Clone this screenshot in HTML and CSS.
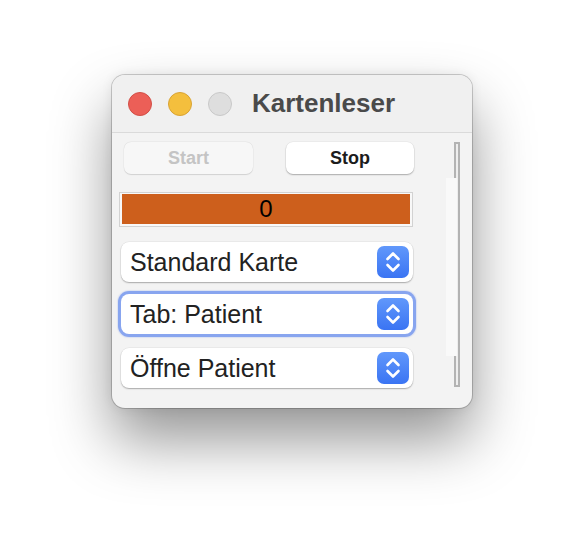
FILE: index.html
```html
<!DOCTYPE html>
<html>
<head>
    <title>Kartenleser</title>
    <link rel="stylesheet" href="styles.css">
</head>
<body>
    <div class="window">
        <div class="titlebar">
            <span class="light red"></span>
            <span class="light yellow"></span>
            <span class="light gray"></span>
            <span class="title">Kartenleser</span>
        </div>

        <div class="content">
            <div class="main">
                <div class="buttons">
                    <button class="btn disabled">Start</button>
                    <button class="btn">Stop</button>
                </div>

                <div class="counter">
                    <div class="counter-inner">0</div>
                </div>

                <div class="popup first">
                    <span class="popup-label">Standard Karte</span>
                    <span class="stepper">
                        <svg width="32" height="32" viewBox="0 0 32 32">
                            <path d="M10.5 13 L16 7.5 L21.5 13" />
                            <path d="M10.5 19 L16 24.5 L21.5 19" />
                        </svg>
                    </span>
                </div>

                <div class="popup focused">
                    <span class="popup-label">Tab: Patient</span>
                    <span class="stepper">
                        <svg width="32" height="32" viewBox="0 0 32 32">
                            <path d="M10.5 13 L16 7.5 L21.5 13" />
                            <path d="M10.5 19 L16 24.5 L21.5 19" />
                        </svg>
                    </span>
                </div>

                <div class="popup last">
                    <span class="popup-label">Öffne Patient</span>
                    <span class="stepper">
                        <svg width="32" height="32" viewBox="0 0 32 32">
                            <path d="M10.5 13 L16 7.5 L21.5 13" />
                            <path d="M10.5 19 L16 24.5 L21.5 19" />
                        </svg>
                    </span>
                </div>
            </div>

            <div class="side">
                <div class="track"></div>
                <div class="patch"></div>
            </div>
        </div>
    </div>
</body>
</html>
```

FILE: styles.css
```css
html, body {
    margin: 0;
    min-height: 556px;
    background: #ffffff;
}

body {
    font-family: 'Liberation Sans', Arial, sans-serif;
    padding-top: 75px;
    box-sizing: border-box;
}

.window {
    margin-left: 112px;
    width: 360px;
    height: 333px;
    border-radius: 13px;
    background: #f3f3f3;
    box-shadow: 0 32px 60px rgba(0,0,0,0.42), 0 0 12px rgba(0,0,0,0.08), 0 0 0 1px rgba(0,0,0,0.18);
    overflow: hidden;
}

.titlebar {
    height: 57px;
    border-bottom: 1px solid #dadada;
    background: #f0f0f0;
    display: flex;
    align-items: center;
    padding-left: 16px;
    gap: 16px;
}

.light {
    width: 22px;
    height: 22px;
    border-radius: 50%;
    border: 1px solid;
}

.light.red {
    background: #ec5f57;
    border-color: #d24f47;
}

.light.yellow {
    background: #f4bf3d;
    border-color: #d9a334;
}

.light.gray {
    background: #dedede;
    border-color: #c9c9c9;
}

.title {
    margin-left: 4px;
    font-size: 26px;
    font-weight: bold;
    color: #4a4a4a;
}

.content {
    display: flex;
    padding-top: 9px;
}

.main {
    margin-left: 7px;
    width: 296px;
}

.buttons {
    display: flex;
    gap: 33px;
    padding-left: 5px;
}

.btn {
    width: 129px;
    height: 32px;
    border: none;
    border-radius: 7px;
    background: #ffffff;
    font-family: 'Liberation Sans', Arial, sans-serif;
    font-size: 18px;
    font-weight: bold;
    color: #1c1c1c;
    box-shadow: 0 1px 1.5px rgba(0,0,0,0.28), 0 0 0 0.5px rgba(0,0,0,0.06);
    padding: 0;
}

.btn + .btn {
    width: 128px;
}

.btn.disabled {
    background: #f7f7f7;
    color: #c4c4c4;
    box-shadow: 0 0.5px 1px rgba(0,0,0,0.12), 0 0 0 0.5px rgba(0,0,0,0.04);
}

.counter {
    margin-top: 18px;
    width: 294px;
    height: 35px;
    box-sizing: border-box;
    border: 1px solid #d2d2d2;
    padding: 1px 2px 2px 2px;
    background: #f8f8f8;
}

.counter-inner {
    height: 100%;
    background: #cd5f1c;
    display: flex;
    align-items: center;
    justify-content: center;
    font-size: 24px;
    color: #000000;
}

.popup {
    margin-left: 2px;
    width: 292px;
    height: 40px;
    box-sizing: border-box;
    border-radius: 8px;
    background: #ffffff;
    box-shadow: 0 1px 1.5px rgba(0,0,0,0.28), 0 0 0 0.5px rgba(0,0,0,0.07);
    display: flex;
    align-items: center;
    justify-content: space-between;
    padding: 0 4px 0 9px;
}

.popup.first {
    margin-top: 15px;
}

.popup.focused {
    margin-top: 12px;
    box-shadow: 0 0 0 3px rgba(86,128,238,0.62), 0 0 1px 4px rgba(86,128,238,0.15);
}

.popup.last {
    margin-top: 14px;
}

.popup-label {
    font-size: 25px;
    color: #222222;
}

.stepper {
    width: 32px;
    height: 32px;
    border-radius: 7px;
    background: linear-gradient(#6198fb, #3a74f3);
    display: flex;
}

.stepper path {
    fill: none;
    stroke: #ffffff;
    stroke-width: 2.6;
    stroke-linecap: round;
    stroke-linejoin: round;
}

.side {
    position: relative;
    flex: 1;
}

.track {
    margin-left: 39px;
    width: 6px;
    height: 245px;
    box-sizing: border-box;
    border: 2px solid #b3b3b3;
    background: #eeeeee;
}

.patch {
    position: absolute;
    left: 31px;
    top: 36px;
    width: 11px;
    height: 178px;
    background: #f9f9f9;
}
```
